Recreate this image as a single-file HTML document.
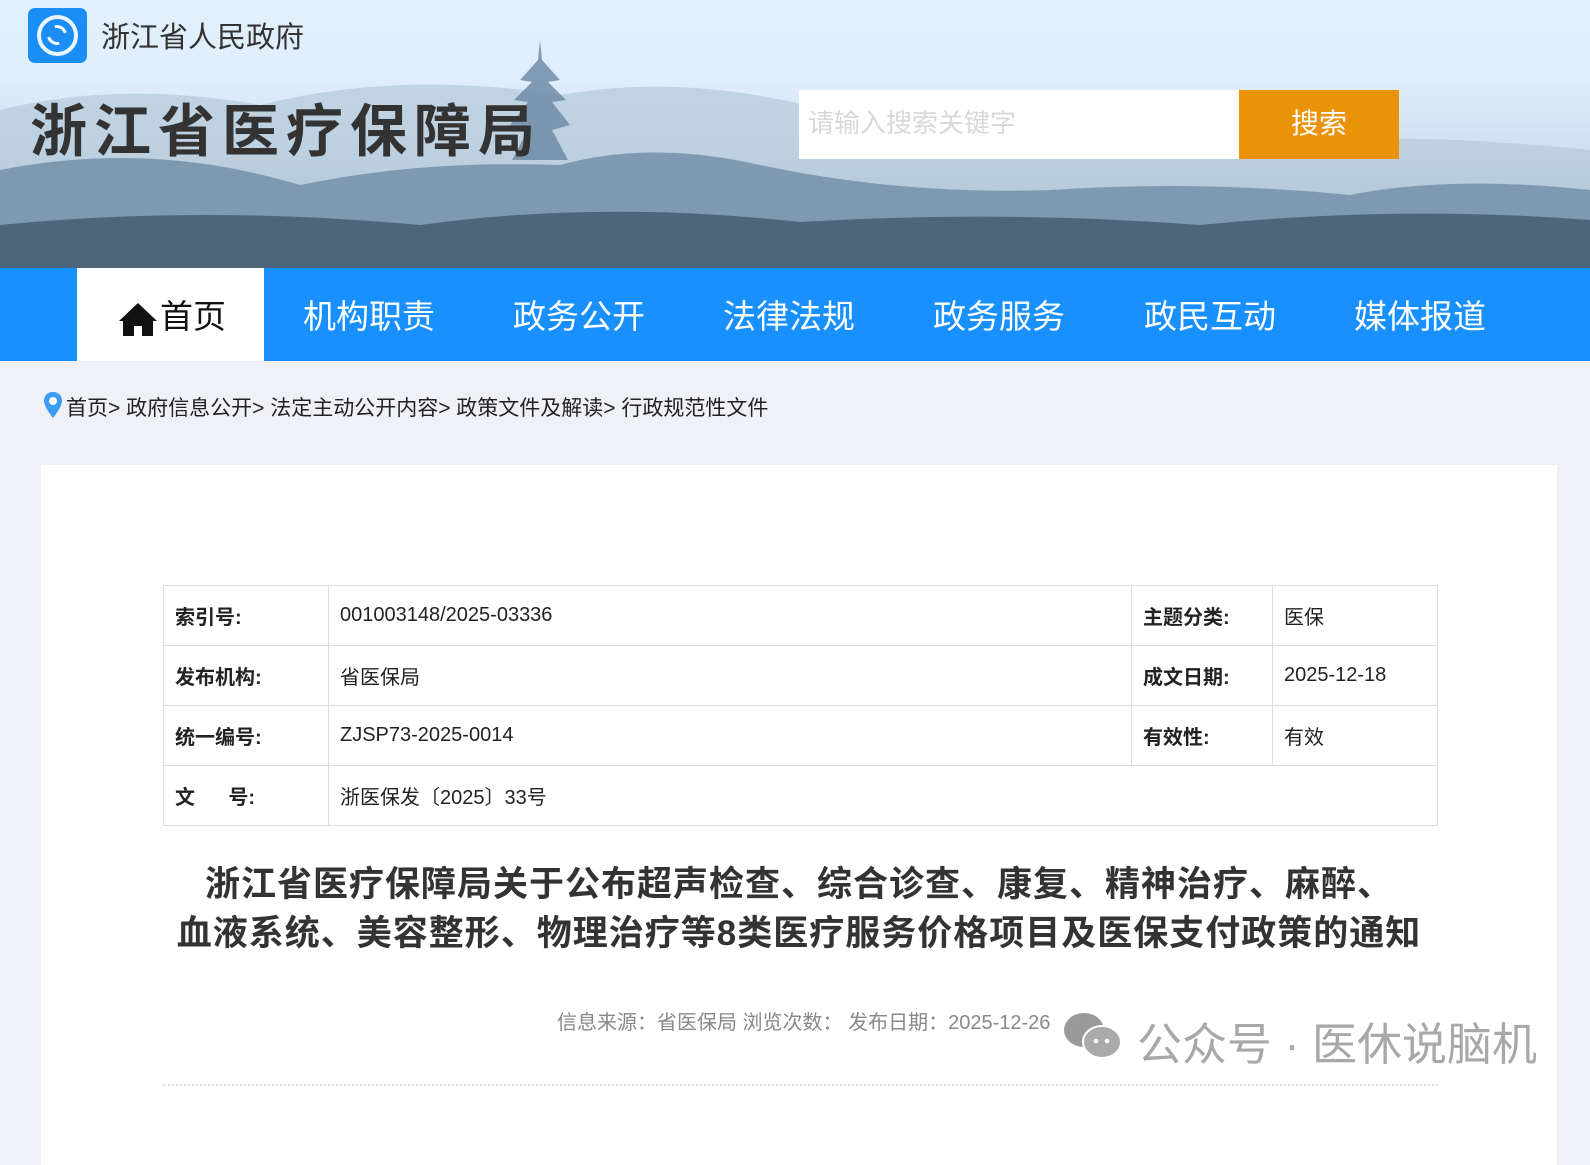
<!DOCTYPE html>
<html><head><meta charset="utf-8"><style>
*{margin:0;padding:0;box-sizing:border-box}
body{width:1590px;height:1100px;overflow:hidden;background:#eff1f6;font-family:"Liberation Sans","Noto Sans CJK SC",sans-serif;color:#333;position:relative}
.hd{position:absolute;left:0;top:0;width:1590px;height:268px;background:linear-gradient(#e2f0fc 0%,#e0eefb 30%,#cfe0ee 55%,#9fb8cc 75%,#6f8ca3 100%);overflow:hidden}
.abs{position:absolute}
.nav{position:absolute;left:0;top:268px;width:1590px;height:93px;background:#1890ff}
.nav span{position:absolute;top:4px;height:93px;line-height:90px;font-size:33px;color:#fff;transform:translateX(-50%);white-space:nowrap}
.home{position:absolute;left:77px;top:268px;width:187px;height:93px;background:#fff}
.box{position:absolute;left:41px;top:465px;width:1516px;height:700px;background:#fff}
table{position:absolute;left:163px;top:585px;width:1275px;border-collapse:collapse;font-size:20px}
td{border:1px solid #ddd;height:60px;padding:0 11px;color:#222}
td.l{font-weight:bold}
.t{position:absolute;left:41px;width:1516px;text-align:center;font-size:35px;font-weight:bold;color:#333;letter-spacing:1px}
</style></head><body>
<div class="hd">
<svg class="abs" style="left:0;top:0" width="1590" height="268">
<path d="M0 110 Q120 80 260 105 Q400 70 560 95 Q700 70 860 120 Q1000 130 1100 120 Q1250 110 1350 140 Q1440 135 1590 150 L1590 268 L0 268Z" fill="#b9cddd" opacity=".8"/>
<path d="M0 170 Q150 140 300 185 Q420 160 560 165 Q650 140 760 165 Q900 195 1050 190 Q1200 180 1350 195 Q1450 175 1590 190 L1590 268 L0 268Z" fill="#7f9ab0"/>
<path d="M0 225 Q200 205 420 225 Q600 200 800 222 Q1000 210 1200 225 Q1400 205 1590 220 L1590 268 L0 268Z" fill="#4d6679"/>
<path d="M538 60 L540 40 L542 60 L560 80 L548 82 L566 100 L552 102 L570 125 L552 130 L568 160 L512 160 L528 130 L510 125 L528 102 L514 100 L532 82 L520 80Z" fill="#6f8ca6" opacity=".85"/>
</svg>
<div class="abs" style="left:28px;top:8px;width:59px;height:55px;border-radius:7px;background:#1a8ef5"><div style="position:absolute;left:9px;top:7px;width:41px;height:41px;border:4px solid #fff;border-radius:50%;opacity:.9"></div><div style="position:absolute;left:19px;top:17px;width:20px;height:20px;border:3px solid #fff;border-color:#fff transparent #fff transparent;border-radius:50%;transform:rotate(30deg)"></div></div>
<div class="abs" style="left:101px;top:14px;font-size:29px;color:#333">浙江省人民政府</div>
<div class="abs" style="left:30px;top:86px;font-size:57px;font-weight:bold;color:#333;letter-spacing:7px">浙江省医疗保障局</div>
<div class="abs" style="left:799px;top:90px;width:440px;height:69px;background:#fff;font-size:26px;color:#d8d8d8;line-height:66px;padding-left:9px">请输入搜索关键字</div>
<div class="abs" style="left:1239px;top:90px;width:160px;height:69px;background:#eb9308;color:#fff;font-size:28px;line-height:67px;text-align:center">搜索</div>
</div>
<div class="nav">
<span style="left:369px">机构职责</span><span style="left:579px">政务公开</span><span style="left:789px">法律法规</span><span style="left:999px">政务服务</span><span style="left:1210px">政民互动</span><span style="left:1420px">媒体报道</span>
</div>
<div class="home">
<svg class="abs" style="left:40px;top:33px" width="42" height="36" viewBox="0 0 42 36"><path d="M21 2 L2 20 L6 20 L6 35 L17 35 L17 25 L25 25 L25 35 L36 35 L36 20 L40 20Z" fill="#111"/></svg>
<div class="abs" style="left:83px;top:4px;line-height:90px;font-size:33px;color:#111">首页</div>
</div>
<svg class="abs" style="left:43px;top:391px" width="20" height="28" viewBox="0 0 20 28"><path d="M10 1 C4 1 1 5 1 10 C1 16 10 27 10 27 C10 27 19 16 19 10 C19 5 16 1 10 1Z" fill="#3b9cf3"/><circle cx="10" cy="10" r="4" fill="#fff"/></svg>
<div class="abs" style="left:66px;top:392px;font-size:21px;color:#222">首页&gt; 政府信息公开&gt; 法定主动公开内容&gt; 政策文件及解读&gt; 行政规范性文件</div>
<div class="box"></div>
<table>
<tr><td class="l" style="width:165px">索引号:</td><td style="width:803px">001003148/2025-03336</td><td class="l" style="width:141px">主题分类:</td><td>医保</td></tr>
<tr><td class="l">发布机构:</td><td>省医保局</td><td class="l">成文日期:</td><td>2025-12-18</td></tr>
<tr><td class="l">统一编号:</td><td>ZJSP73-2025-0014</td><td class="l">有效性:</td><td>有效</td></tr>
<tr><td class="l">文&nbsp;&nbsp;&nbsp;&nbsp;&nbsp;&nbsp;号:</td><td colspan="3">浙医保发〔2025〕33号</td></tr>
</table>
<div class="t" style="top:856px">浙江省医疗保障局关于公布超声检查、综合诊查、康复、精神治疗、麻醉、</div>
<div class="t" style="top:905px">血液系统、美容整形、物理治疗等8类医疗服务价格项目及医保支付政策的通知</div>
<div class="abs" style="left:557px;top:1006px;font-size:20px;color:#888">信息来源：省医保局 浏览次数：&nbsp;发布日期：2025-12-26</div>
<svg class="abs" style="left:1062px;top:1010px" width="62" height="52" viewBox="0 0 62 52"><ellipse cx="22" cy="20" rx="20" ry="17" fill="#999"/><ellipse cx="40" cy="32" rx="19" ry="16" fill="#aaa" stroke="#fff" stroke-width="2"/><circle cx="34" cy="31" r="2.3" fill="#fff"/><circle cx="45" cy="31" r="2.3" fill="#fff"/></svg>
<div class="abs" style="left:1137px;top:1008px;font-size:45px;color:#a8a8a8">公众号 · 医休说脑机</div>
<div class="abs" style="left:163px;top:1084px;width:1275px;border-top:2px dotted #ddd"></div>
</body></html>
